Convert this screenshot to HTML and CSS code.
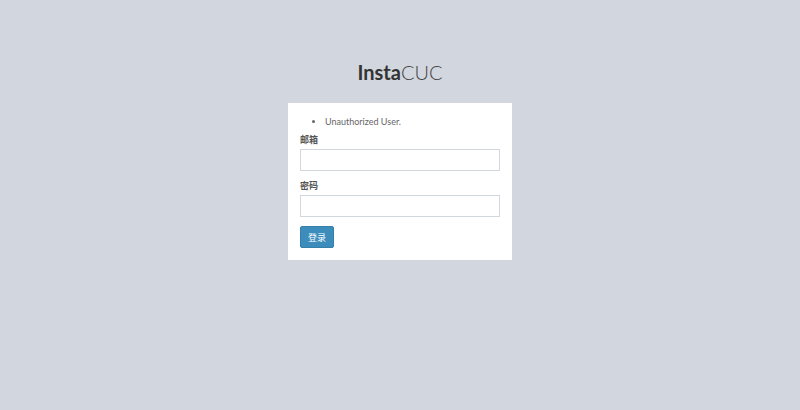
FILE: index.html
```html
<!DOCTYPE html>
<html lang="zh">
<head>
<meta charset="utf-8">
<title>InstaCUC</title>
<link rel="stylesheet" href="styles.css">
</head>
<body>
<div class="login-box">
  <div class="logo"><b>Insta</b>CUC</div>
  <div class="login-body">
    <ul class="errors"><li>Unauthorized User.</li></ul>
    <form class="form">
      <div class="group">
        <label class="label">邮箱</label>
        <input class="input" type="text">
      </div>
      <div class="group">
        <label class="label">密码</label>
        <input class="input" type="password">
      </div>
      <button class="btn" type="button">登录</button>
    </form>
  </div>
</div>
</body>
</html>
```
FILE: styles.css
```css
html, body {
  margin: 0;
  padding: 0;
  height: 100%;
}
body {
  background: #d2d6de;
  font-family: "Lato", "Noto Sans CJK SC", sans-serif;
  color: #333;
}
.login-box {
  width: 224px;
  margin: 0 auto;
  padding-top: 58px;
}
.logo {
  text-align: center;
  font-size: 20px;
  line-height: 28px;
  color: #444;
  font-weight: 300;
  margin-bottom: 17px;
}
.logo b {
  font-weight: 700;
  color: #333;
}
.login-body {
  background: #fff;
  padding: 12px;
}
.errors {
  margin: 0 0 5px 0;
  padding-left: 25px;
  font-size: 9px;
  line-height: 13px;
  color: #666;
}
.group {
  margin-bottom: 8px;
}
.label {
  display: block;
  font-size: 9px;
  font-weight: 700;
  color: #555;
  line-height: 13px;
  margin-bottom: 3px;
}
.input {
  display: block;
  box-sizing: border-box;
  width: 100%;
  height: 22px;
  border: 1px solid #d2d6de;
  margin: 0;
  padding: 0 7px;
  background: #fff;
}
.btn {
  display: block;
  margin-top: 9px;
  height: 22px;
  padding: 0 7px;
  border: 1px solid #367fa9;
  background: #3c8dbc;
  color: #fff;
  font-family: "Noto Sans CJK SC", sans-serif;
  font-size: 9px;
  border-radius: 2px;
}
```
